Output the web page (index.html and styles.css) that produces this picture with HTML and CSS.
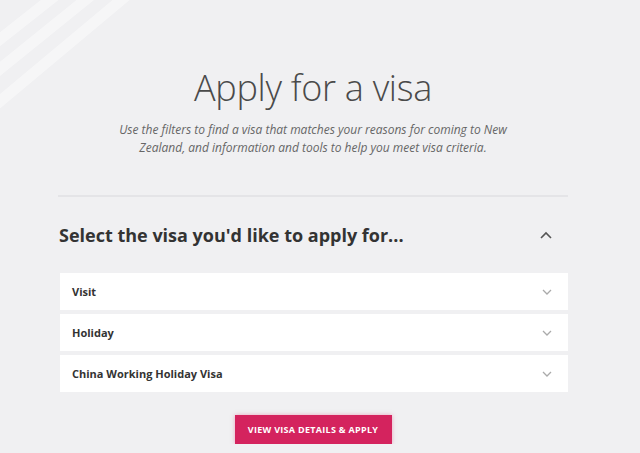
FILE: index.html
```html
<!DOCTYPE html>
<html lang="en">
<head>
    <meta charset="UTF-8">
    <meta name="viewport" content="width=device-width, initial-scale=1.0">
    <title>Apply for a visa</title>
    <link rel="stylesheet" href="styles.css">
</head>
<body>

<!-- faint stripes in the corner -->
<svg class="stripes" width="220" height="130" viewBox="0 0 220 130">
    <g stroke="#ffffff" stroke-width="11" opacity="0.45">
        <line x1="-20" y1="55" x2="75" y2="-20"/>
        <line x1="-20" y1="85" x2="110" y2="-20"/>
        <line x1="-20" y1="118" x2="145" y2="-20"/>
    </g>
</svg>

<div class="page">
    <header class="intro">
        <h1>Apply for a visa</h1>
        <p>Use the filters to find a visa that matches your reasons for coming to New Zealand, and information and tools to help you meet visa criteria.</p>
    </header>

    <section class="picker">
        <div class="picker-head">
            <h2>Select the visa you'd like to apply for...</h2>
            <svg class="caret-up" width="12" height="8" viewBox="0 0 12 8">
                <path d="M1 7 L6 2 L11 7" fill="none" stroke="#555" stroke-width="1.6"/>
            </svg>
        </div>

        <div class="options">
            <div class="option">
                <span>Visit</span>
                <svg width="10" height="6" viewBox="0 0 10 6"><path d="M1 1 L5 5 L9 1" fill="none" stroke="#aaa" stroke-width="1.3"/></svg>
            </div>
            <div class="option">
                <span>Holiday</span>
                <svg width="10" height="6" viewBox="0 0 10 6"><path d="M1 1 L5 5 L9 1" fill="none" stroke="#aaa" stroke-width="1.3"/></svg>
            </div>
            <div class="option">
                <span>China Working Holiday Visa</span>
                <svg width="10" height="6" viewBox="0 0 10 6"><path d="M1 1 L5 5 L9 1" fill="none" stroke="#aaa" stroke-width="1.3"/></svg>
            </div>
        </div>

        <div class="actions">
            <a class="btn" href="#">View visa details &amp; apply</a>
        </div>
    </section>
</div>

</body>
</html>
```

FILE: styles.css
```css
body {
    margin: 0;
    padding: 0;
    background: #f0f0f2;
    font-family: "Open Sans", "Liberation Sans", sans-serif;
    color: #333;
    overflow: hidden;
}

.stripes {
    position: absolute;
    top: 0;
    left: 0;
}

.page {
    width: 510px;
    margin-left: 58px;
    padding-top: 66px;
    position: relative;
}

.intro {
    text-align: center;
    padding-bottom: 38px;
    border-bottom: 2px solid #e4e4e7;
}

.intro h1 {
    margin: 0;
    font-size: 36px;
    font-weight: 300;
    color: #4a4a4a;
    letter-spacing: -0.3px;
    line-height: 44px;
}

.intro p {
    margin: 11px auto 0;
    width: 410px;
    font-size: 12px;
    font-style: italic;
    line-height: 18px;
    color: #666;
}

.picker-head {
    display: flex;
    align-items: center;
    justify-content: space-between;
    padding: 23px 16px 0 1px;
    height: 30px;
}

.picker-head h2 {
    margin: 0;
    font-size: 18px;
    font-weight: 700;
    color: #333;
}

.options {
    margin-top: 23px;
    display: flex;
    flex-direction: column;
    gap: 4px;
}

.option {
    background: #fff;
    height: 37px;
    display: flex;
    align-items: center;
    justify-content: space-between;
    padding: 0 16px 0 12px;
    margin-left: 2px;
    font-size: 11px;
    font-weight: 700;
    color: #333;
}

.actions {
    display: flex;
    justify-content: center;
    margin-top: 23px;
}

.btn {
    display: block;
    background: #d4235e;
    color: #fff;
    text-decoration: none;
    text-transform: uppercase;
    font-size: 9px;
    font-weight: 700;
    letter-spacing: 0.3px;
    width: 157px;
    height: 29px;
    line-height: 29px;
    text-align: center;
    box-shadow: 0 0 4px rgba(230, 90, 140, 0.5);
}
```
